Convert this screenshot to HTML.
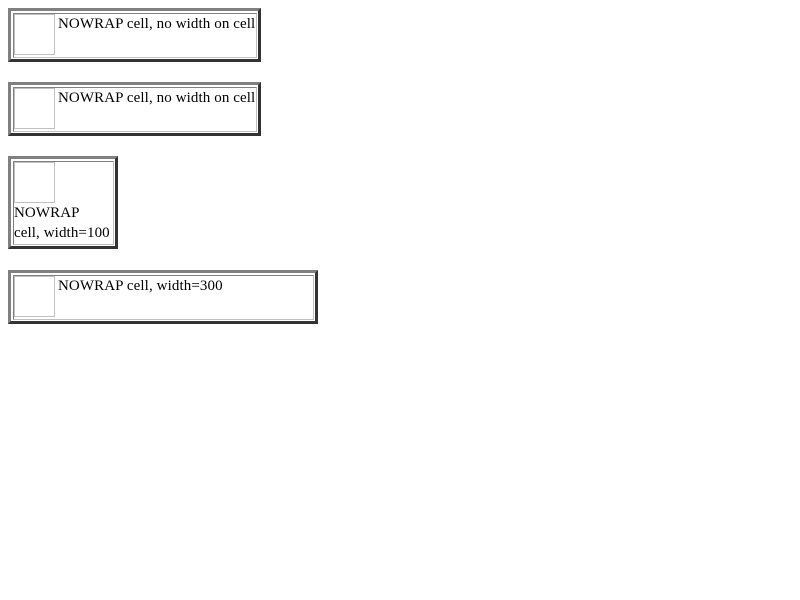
<!DOCTYPE html>
<html><head><style>
body{margin:0;background:#fff;font-family:"Liberation Serif",serif;font-size:15px;color:#000}
.t{position:absolute;box-sizing:border-box;border:3px solid;border-color:#808080 #333 #333 #808080;background:#fff}
.c{position:absolute;box-sizing:border-box;border:1px solid;border-color:#808080 #c0c0c0 #c0c0c0 #808080;left:2px;top:2px}
.b{position:absolute;left:0;top:0;width:41px;height:41px;box-sizing:border-box;border:1px solid #c0c0c0}
.x{position:absolute;white-space:nowrap;line-height:20px;letter-spacing:0.1px}
</style></head><body>
<div class="t" style="left:8px;top:8px;width:253px;height:54px"><div class="c" style="width:244px;height:45px"><div class="b"></div><div class="x" style="left:44px;top:0">NOWRAP cell, no width on cell</div></div></div>
<div class="t" style="left:8px;top:82px;width:253px;height:54px"><div class="c" style="width:244px;height:45px"><div class="b"></div><div class="x" style="left:44px;top:0">NOWRAP cell, no width on cell</div></div></div>
<div class="t" style="left:8px;top:156px;width:110px;height:93px"><div class="c" style="width:101px;height:84px"><div class="b"></div><div class="x" style="left:0;top:41px">NOWRAP<br>cell, width=100</div></div></div>
<div class="t" style="left:8px;top:270px;width:310px;height:54px"><div class="c" style="width:301px;height:45px"><div class="b"></div><div class="x" style="left:44px;top:0">NOWRAP cell, width=300</div></div></div>
</body></html>
